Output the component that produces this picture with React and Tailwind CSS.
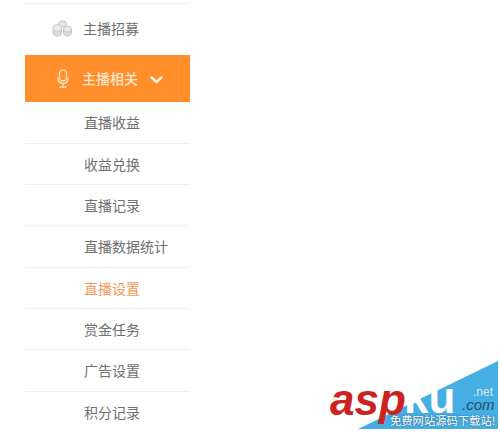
import React from 'react';

const items = [
  { label: '直播收益', h: 'h-[42px]' },
  { label: '收益兑换', h: 'h-[41px]' },
  { label: '直播记录', h: 'h-[41px]' },
  { label: '直播数据统计', h: 'h-[42px]' },
  { label: '直播设置', h: 'h-[41px]', active: true },
  { label: '赏金任务', h: 'h-[41px]' },
  { label: '广告设置', h: 'h-[42px]' },
  { label: '积分记录', h: 'h-[41px]', last: true },
];

const CoinsIcon = () => (
  <svg width="21" height="17" viewBox="0 0 21 17" fill="none" stroke="#c8c8c8" strokeWidth="1">
    <ellipse cx="10.500" cy="4" rx="4" ry="3.200" fill="#e4e4e4" />
    <path d="M1 8v5c0 1.800 2 3.200 4.250 3.200S9.500 14.800 9.500 13V8" fill="#dcdcdc" />
    <ellipse cx="5.250" cy="8" rx="4.250" ry="3.200" fill="#ececec" />
    <path d="M11.500 9v4c0 1.600 1.800 3 4 3s4-1.400 4-3V9" fill="#dcdcdc" />
    <ellipse cx="15.500" cy="9" rx="4" ry="3" fill="#ececec" />
  </svg>
);

const MicIcon = () => (
  <svg width="12" height="19" viewBox="0 0 12 19" fill="none" stroke="#fde0bd" strokeWidth="1.400" strokeLinecap="round">
    <rect x="2.500" y="1" width="7" height="11" rx="3.500" />
    <path d="M1 9c0 3.500 2 5.500 5 5.500S11 12.500 11 9" />
    <path d="M6 14.500V18M3 18h6" />
  </svg>
);

const Chevron = () => (
  <svg width="13" height="8" viewBox="0 0 13 8" fill="none" stroke="#fff0df" strokeWidth="2.400" strokeLinecap="round" strokeLinejoin="round">
    <path d="M1.500 1.500 6.500 6l5-4.500" />
  </svg>
);

const Watermark = () => (
  <div className="absolute left-[330px] top-[360px] w-[170px] h-[72px] overflow-hidden">
    <svg className="absolute inset-0" width="170" height="72" viewBox="0 0 170 72">
      <path d="M168 1V69H28Z" fill="#45aee3" />
    </svg>
    <span className="absolute left-0 top-[15px] text-[44px] leading-[50px] font-bold italic text-[#cc2222] [font-family:'Liberation_Sans',sans-serif]">asp</span>
    <span className="absolute left-[74px] top-[13px] text-[44px] leading-[50px] font-bold text-white [font-family:'Liberation_Sans',sans-serif]">ku</span>
    <span className="absolute left-[143px] top-[26px] text-[12px] leading-[12px] text-[#d5ebf7] [font-family:'Liberation_Sans',sans-serif]">.net</span>
    <span className="absolute left-[132px] top-[37px] text-[15px] leading-[15px] italic text-[#24506e] [font-family:'Liberation_Sans',sans-serif]">.com</span>
    <span className="absolute left-[60px] top-[53px] text-[11.300px] leading-[14px] whitespace-nowrap text-white [text-shadow:0_0_2px_#24506e] [font-family:'Noto_Sans_CJK_SC',sans-serif]">免费网站源码下载站!</span>
  </div>
);

export default function App() {
  return (
    <div className="relative w-[500px] h-[432px] overflow-hidden bg-white [font-family:'Noto_Sans_CJK_SC',sans-serif]">
      <div className="ml-[25px] w-[165px] pt-[3px]">
        <div className="h-[52px] border-t border-[#efefef] flex items-center pb-[2px] pl-[27px]">
          <CoinsIcon />
          <span className="ml-[10px] text-[14px] text-[#707070]">主播招募</span>
        </div>
        <div className="h-[47px] bg-[#ff8e2b] flex items-center pl-[32px]">
          <MicIcon />
          <span className="ml-[13px] text-[14px] font-medium text-[#fde6cc]">主播相关</span>
          <span className="ml-[12px] mt-[3px] flex"><Chevron /></span>
        </div>
        {items.map((item) => (
          <div key={item.label} className={`${item.h} flex items-center pl-[59px] border-b ${item.last ? 'border-transparent' : 'border-[#f0f0f0]'}`}>
            <span className={`text-[14px] ${item.active ? 'text-[#f9985a]' : 'text-[#707070]'}`}>{item.label}</span>
          </div>
        ))}
      </div>
      <Watermark />
    </div>
  );
}
